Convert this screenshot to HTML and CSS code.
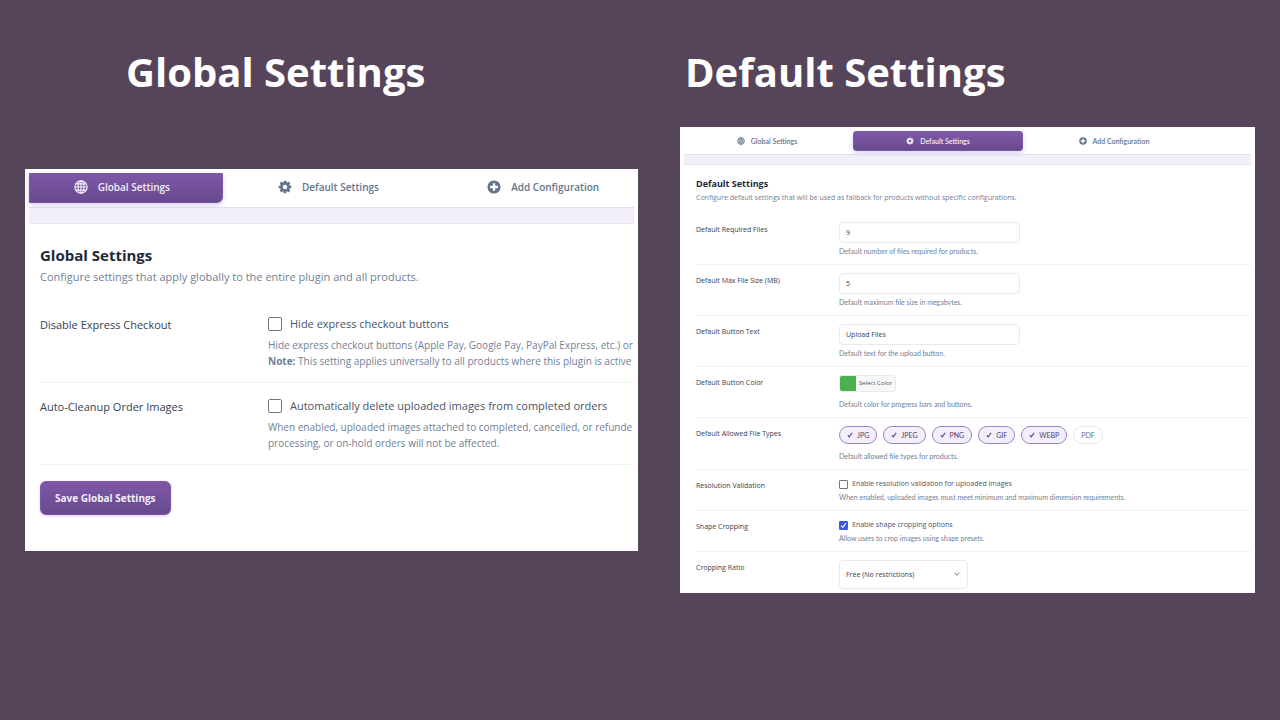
FILE: index.html
```html
<!DOCTYPE html>
<html lang="en">
<head>
  <meta charset="UTF-8">
  <meta name="viewport" content="width=device-width, initial-scale=1.0">
  <title>Plugin Settings</title>
  <link rel="stylesheet" href="styles.css">
</head>
<body>

  <!-- Shared icons -->
  <svg class="sprite" aria-hidden="true">
    <symbol id="icon-globe" viewBox="0 0 16 16">
      <g fill="none" stroke="currentColor" stroke-width="1.3">
        <circle cx="8" cy="8" r="7"/>
        <ellipse cx="8" cy="8" rx="3.4" ry="7"/>
        <path d="M8 1v14M1 8h14M2 4.5h12M2 11.5h12"/>
      </g>
    </symbol>
    <symbol id="icon-gear" viewBox="0 0 16 16">
      <g fill="none" stroke="currentColor">
        <circle cx="8" cy="8" r="4.1" stroke-width="3.2"/>
        <path stroke-width="3" d="M8 .8v2.4M8 12.8v2.4M.8 8h2.4M12.8 8h2.4M2.9 2.9l1.7 1.7M11.4 11.4l1.7 1.7M2.9 13.1l1.7-1.7M11.4 4.6l1.7-1.7"/>
      </g>
    </symbol>
    <symbol id="icon-plus" viewBox="0 0 16 16">
      <path fill="currentColor" fill-rule="evenodd" d="M8 .5a7.5 7.5 0 1 0 0 15a7.5 7.5 0 0 0 0-15zM6.7 3.6h2.6v3.1h3.1v2.6H9.3v3.1H6.7V9.3H3.6V6.7h3.1z"/>
    </symbol>
    <symbol id="icon-check" viewBox="0 0 10 10">
      <path fill="none" stroke="currentColor" stroke-width="1.9" d="M1.4 5.4l2.4 2.6L8.6 1.6"/>
    </symbol>
  </svg>

  <main class="page">
    <h1 class="title title-global">Global Settings</h1>
    <h1 class="title">Default Settings</h1>

    <!-- Global settings -->
    <section class="panel panel-global">
      <nav class="tabs">
        <button type="button" class="tab active"><svg class="icon"><use href="#icon-globe"/></svg>Global Settings</button>
        <button type="button" class="tab"><svg class="icon"><use href="#icon-gear"/></svg>Default Settings</button>
        <button type="button" class="tab"><svg class="icon"><use href="#icon-plus"/></svg>Add Configuration</button>
      </nav>
      <div class="band"></div>
      <form class="content">
        <h2>Global Settings</h2>
        <p class="intro">Configure settings that apply globally to the entire plugin and all products.</p>

        <div class="row">
          <div class="label">Disable Express Checkout</div>
          <div class="field">
            <label class="check"><input type="checkbox">Hide express checkout buttons</label>
            <p class="help">Hide express checkout buttons (Apple Pay, Google Pay, PayPal Express, etc.) or<br><strong>Note:</strong> This setting applies universally to all products where this plugin is active</p>
          </div>
        </div>

        <div class="row">
          <div class="label">Auto-Cleanup Order Images</div>
          <div class="field">
            <label class="check"><input type="checkbox">Automatically delete uploaded images from completed orders</label>
            <p class="help">When enabled, uploaded images attached to completed, cancelled, or refunde<br>processing, or on-hold orders will not be affected.</p>
          </div>
        </div>

        <button type="button" class="save">Save Global Settings</button>
      </form>
    </section>

    <!-- Default settings -->
    <section class="panel panel-default">
      <nav class="tabs">
        <button type="button" class="tab"><svg class="icon"><use href="#icon-globe"/></svg>Global Settings</button>
        <button type="button" class="tab active"><svg class="icon"><use href="#icon-gear"/></svg>Default Settings</button>
        <button type="button" class="tab"><svg class="icon"><use href="#icon-plus"/></svg>Add Configuration</button>
      </nav>
      <div class="band"></div>
      <form class="content">
        <h2>Default Settings</h2>
        <p class="intro">Configure default settings that will be used as fallback for products without specific configurations.</p>

        <div class="row">
          <label class="label" for="required-files">Default Required Files</label>
          <div class="field">
            <input class="text" id="required-files" type="text" value="9">
            <p class="help">Default number of files required for products.</p>
          </div>
        </div>

        <div class="row">
          <label class="label" for="max-size">Default Max File Size (MB)</label>
          <div class="field">
            <input class="text" id="max-size" type="text" value="5">
            <p class="help">Default maximum file size in megabytes.</p>
          </div>
        </div>

        <div class="row">
          <label class="label" for="button-text">Default Button Text</label>
          <div class="field">
            <input class="text" id="button-text" type="text" value="Upload Files">
            <p class="help">Default text for the upload button.</p>
          </div>
        </div>

        <div class="row">
          <label class="label" for="button-color">Default Button Color</label>
          <div class="field">
            <button type="button" class="color" id="button-color"><span class="swatch"></span><span class="color-text">Select Color</span></button>
            <p class="help spaced">Default color for progress bars and buttons.</p>
          </div>
        </div>

        <div class="row">
          <div class="label">Default Allowed File Types</div>
          <div class="field">
            <div class="chips">
              <label class="chip on"><input type="checkbox" checked><svg class="tick"><use href="#icon-check"/></svg>JPG</label>
              <label class="chip on"><input type="checkbox" checked><svg class="tick"><use href="#icon-check"/></svg>JPEG</label>
              <label class="chip on"><input type="checkbox" checked><svg class="tick"><use href="#icon-check"/></svg>PNG</label>
              <label class="chip on"><input type="checkbox" checked><svg class="tick"><use href="#icon-check"/></svg>GIF</label>
              <label class="chip on"><input type="checkbox" checked><svg class="tick"><use href="#icon-check"/></svg>WEBP</label>
              <label class="chip"><input type="checkbox">PDF</label>
            </div>
            <p class="help spaced">Default allowed file types for products.</p>
          </div>
        </div>

        <div class="row">
          <div class="label">Resolution Validation</div>
          <div class="field">
            <label class="check"><input type="checkbox">Enable resolution validation for uploaded images</label>
            <p class="help">When enabled, uploaded images must meet minimum and maximum dimension requirements.</p>
          </div>
        </div>

        <div class="row">
          <div class="label">Shape Cropping</div>
          <div class="field">
            <label class="check"><input type="checkbox" checked>Enable shape cropping options</label>
            <p class="help">Allow users to crop images using shape presets.</p>
          </div>
        </div>

        <div class="row">
          <label class="label" for="ratio">Cropping Ratio</label>
          <div class="field">
            <div class="select">
              <select id="ratio">
                <option>Free (No restrictions)</option>
              </select>
              <svg class="chevron" viewBox="0 0 10 10"><path fill="none" stroke="currentColor" stroke-width="1.6" d="M1 3l4 4l4-4"/></svg>
            </div>
          </div>
        </div>
      </form>
    </section>
  </main>

</body>
</html>
```
FILE: styles.css
```css
* {
  box-sizing: border-box;
}

body {
  margin: 0;
  background-color: #56455a;
  font-family: "Open Sans", "Noto Sans", sans-serif;
  color: #334155;
}

button,
input,
select {
  font-family: inherit;
  margin: 0;
}

h1, h2, p {
  margin: 0;
}

.sprite {
  display: none;
}

.page {
  display: grid;
  grid-template-columns: 613fr 575fr;
  grid-template-rows: auto 1fr;
  column-gap: 42px;
  align-items: center;
  min-height: 100vh;
  padding: 47px 25px 97px;
}

.title {
  padding-left: 5px;
  font-size: 40px;
  line-height: 50px;
  font-weight: 700;
  color: #fff;
}

.title-global {
  padding-left: 101px;
}

.panel {
  min-width: 0;
  background-color: #fff;
  padding: 4px;
}

/* Tabs */
.tabs {
  display: grid;
  column-gap: 3px;
}

.tab {
  display: flex;
  align-items: center;
  justify-content: center;
  padding: 0;
  border: none;
  background: none;
  color: #64748b;
  font-weight: 600;
  white-space: nowrap;
  cursor: pointer;
}

.tab.active,
.save {
  background: linear-gradient(#7e57a8, #674a8c);
  border: 1px solid #7b58a6;
  color: #f3effa;
}

.tab.active {
  box-shadow: 0 2px 5px #d5cdf3;
}

.band {
  background-color: #f2effa;
  border-top: 1px solid #e2deed;
  border-bottom: 1px solid #e8e5f1;
}

/* Form rows */
h2 {
  font-weight: 700;
  color: #1e293b;
}

.intro,
.help {
  color: #718096;
}

.row {
  display: grid;
  border-bottom: 1px solid #f1f3f7;
}

.field {
  min-width: 0;
}

.help {
  white-space: nowrap;
}

.check {
  display: flex;
  align-items: center;
  color: #475569;
  white-space: nowrap;
}

.check input {
  appearance: none;
  flex: none;
  border: 1px solid #767676;
  border-radius: 2px;
  background-color: #fff;
}

.check input:checked {
  border-color: #3858e9;
  background: #3858e9 url("data:image/svg+xml,%3Csvg xmlns='http://www.w3.org/2000/svg' viewBox='0 0 10 10'%3E%3Cpath fill='none' stroke='white' stroke-width='1.6' d='M1.5 5.2l2.5 2.5l4.5-6'/%3E%3C/svg%3E") center / contain no-repeat;
}

/* Global panel */
.panel-global {
  overflow: hidden;
}

.panel-global .tabs {
  grid-template-columns: 32% 34% 36%;
  height: 34px;
  padding-bottom: 4px;
}

.panel-global .tab {
  gap: 10px;
  padding-bottom: 3px;
  font-size: 10px;
}

.panel-global .tab.active {
  padding-right: 8px;
  border-radius: 0 0 6px 0;
}

.panel-global .icon {
  width: 14px;
  height: 14px;
}

.panel-global .band {
  height: 17px;
}

.panel-global .content {
  padding: 20px 0 32px 11px;
  overflow: hidden;
}

.panel-global h2 {
  font-size: 15px;
  line-height: 22px;
}

.panel-global .intro {
  margin-top: 2px;
  font-size: 11px;
  line-height: 18px;
  padding-bottom: 15px;
}

.panel-global .row {
  grid-template-columns: 228px 1fr;
  padding: 14px 0 13px;
}

.panel-global .label {
  font-size: 11px;
  line-height: 20px;
}

.panel-global .check {
  gap: 8px;
  font-size: 11px;
  line-height: 18px;
}

.panel-global .check input {
  width: 14px;
  height: 14px;
}

.panel-global .help {
  margin-top: 4px;
  font-size: 10px;
  line-height: 16px;
}

.save {
  margin-top: 16px;
  padding: 0 14px;
  border-radius: 6px;
  font-size: 10px;
  line-height: 32px;
  font-weight: 700;
  box-shadow: 0 1px 3px #d5cdf3;
  cursor: pointer;
}

/* Default panel */
.panel-default .tabs {
  grid-template-columns: 166fr 170fr 176fr;
  height: 23px;
  padding: 0 49px 3px 0;
}

.panel-default .tab {
  gap: 6px;
  font-size: 7px;
}

.panel-default .tab,
.panel-default .help,
.panel-default .chip {
  font-family: Lato, "Open Sans", sans-serif;
}

.panel-default .tab.active {
  border-radius: 3px;
}

.panel-default .icon {
  width: 8px;
  height: 8px;
}

.panel-default .band {
  height: 11px;
}

.panel-default .content {
  padding: 12px 0 0 12px;
}

.panel-default h2 {
  font-size: 9px;
  line-height: 14px;
}

.panel-default .intro {
  margin-top: 2px;
  padding-bottom: 11px;
  font-size: 7px;
  line-height: 10px;
}

.panel-default .row {
  grid-template-columns: 143px 1fr;
  padding: 8px 0;
}

.panel-default .row:last-child {
  padding-bottom: 0;
  border-bottom: none;
}

.panel-default .label {
  padding-top: 3px;
  font-size: 7px;
  line-height: 10px;
}

.panel-default .check {
  gap: 4px;
  font-size: 7px;
  line-height: 12px;
}

.panel-default .check input {
  width: 9px;
  height: 9px;
  border-radius: 1px;
}

.panel-default .help {
  margin-top: 2px;
  font-size: 7px;
  line-height: 10px;
}

.panel-default .text + .help {
  margin-top: 3px;
}

.panel-default .help.spaced {
  margin-top: 7px;
}

.text,
.select select {
  display: block;
  padding: 0 6px;
  border: 1px solid #e8eaf0;
  border-radius: 4px;
  background-color: #fff;
  color: #334155;
  font-size: 7px;
}

.text {
  width: 181px;
  height: 21px;
}

.color {
  display: flex;
  height: 17px;
  padding: 0;
  border: 1px solid #e8eaec;
  border-radius: 3px;
  background-color: #f6f7f7;
  overflow: hidden;
  cursor: pointer;
}

.swatch {
  width: 16px;
  background-color: #4caf50;
}

.color-text {
  padding: 0 3px;
  font-size: 6px;
  line-height: 15px;
  color: #50575e;
}

.chips {
  display: flex;
  gap: 6px;
}

.chip {
  display: flex;
  align-items: center;
  gap: 4px;
  height: 18px;
  padding: 0 7px;
  border: 1px solid #e8eaf0;
  border-radius: 9px;
  font-size: 7px;
  color: #64748b;
}

.chip.on {
  border-color: #a084c4;
  background-color: #f3effa;
  color: #4f3b70;
}

.chip input {
  appearance: none;
  display: none;
}

.tick {
  width: 6px;
  height: 6px;
  color: #674a8c;
}

.select {
  position: relative;
  width: 129px;
}

.select select {
  appearance: none;
  width: 100%;
  height: 29px;
}

.chevron {
  position: absolute;
  right: 8px;
  top: 11px;
  width: 6px;
  height: 6px;
  color: #64748b;
  pointer-events: none;
}
```
